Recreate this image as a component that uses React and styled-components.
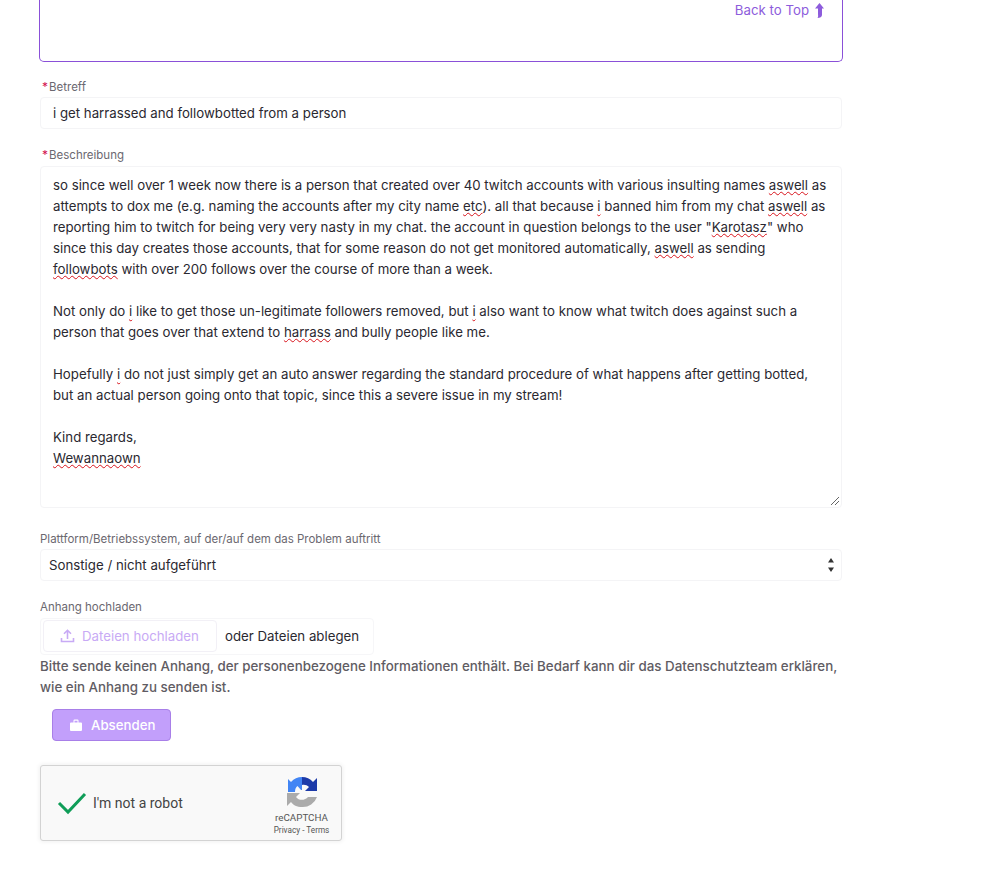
import React from "react";
import styled, { createGlobalStyle } from "styled-components";

const Global = createGlobalStyle`
  html, body { margin: 0; padding: 0; background: #fff; }
  body { font-family: Inter, "Noto Sans", "Liberation Sans", sans-serif; color: #232127; }
  * { box-sizing: border-box; }
`;
const Page = styled.div`
  width: 984px; height: 870px; overflow: hidden; padding-left: 39px;
  display: flex; flex-direction: column; align-items: flex-start;
`;
const TopPanel = styled.div`
  width: 804px; height: 62px; border: 1px solid #8a50d8; border-top: 0;
  border-radius: 0 0 5px 5px; display: flex; justify-content: flex-end;
  align-items: flex-start; padding: 2px 17px 0 0; gap: 5px;
  color: #8d5cdc; font-size: 13.25px; line-height: 17px;
`;
const Label = styled.div`
  display: flex; align-items: baseline; font-size: 11.5px; line-height: 14px; color: #6b6870;
  margin-top: ${p => p.$top}px; padding-left: ${p => (p.$required ? 3 : 1)}px;
`;
const Star = styled.span` color: #d3124f; margin-right: 1px; font-size: 12px; `;
const Field = styled.div`
  width: 802px; height: ${p => p.$h}px; margin-top: ${p => p.$gap}px; margin-left: 1px;
  border: 1px solid #f4f4f6; border-radius: 4px; background: #fff;
  font-size: 13.25px; line-height: 21px; color: #2a2830;
`;
const SingleLine = styled(Field)`
  display: flex; align-items: center; justify-content: space-between;
  padding: 0 ${p => p.$pr || 12}px 0 ${p => p.$pl || 12}px;
`;
const Multi = styled(Field)`
  position: relative; padding: 8px 12px;
`;
const Line = styled.div` white-space: pre; min-height: 21px; `;
const Sp = styled.span` text-decoration: underline wavy #d8141c 1px; text-underline-offset: 1px; `;
const Grip = styled.svg` position: absolute; right: 1px; bottom: 1px; `;
const Drop = styled.div`
  width: 334px; height: 37px; margin: 4px 0 0 1px; border: 1px solid #f6f6f8; border-radius: 4px;
  display: flex; align-items: center; padding: 0 0 2px 2px; gap: 8px; font-size: 13.25px; color: #2a2830;
`;
const UploadBtn = styled.div`
  width: 174px; height: 32px; border: 1px solid #f2f0f6; border-radius: 4px;
  display: flex; align-items: center; padding-left: 16px; gap: 7px; color: #c8aaf5;
`;
const Note = styled.div`
  margin: 1px 0 0 1px; font-size: 13.35px; line-height: 21px; color: #5f5c63; font-weight: 500; white-space: pre;
`;
const Submit = styled.div`
  margin: 11px 0 0 13px; width: 119px; height: 32px; background: #c29ffb; border: 1px solid #a87fe8;
  border-radius: 4px; display: flex; align-items: center; padding-left: 16px; gap: 8px;
  color: #fff; font-size: 13.25px; font-weight: 500;
`;
const Captcha = styled.div`
  position: relative; margin: 24px 0 0 1px; width: 302px; height: 76px; background: #f9f9f9;
  border: 1px solid #d3d3d3; border-radius: 3px; box-shadow: 0 0 4px 1px rgba(0,0,0,.06);
  display: flex; align-items: center; font-family: Roboto, "Liberation Sans", sans-serif;
`;
const Check = styled.svg` margin-left: 16px; flex: none; `;
const CaptchaText = styled.span` margin-left: 6px; font-size: 14px; color: #444; `;
const Badge = styled.div`
  margin-left: auto; width: 70px; padding: 5px 9px 0 0; display: flex; flex-direction: column; align-items: center;
`;
const BadgeName = styled.div` font-size: 9.8px; line-height: 11px; margin-top: 4px; color: #555; `;
const BadgeLinks = styled.div` font-size: 8.2px; line-height: 11px; margin-top: 2px; white-space: pre; color: #555; `;

export default function App() {
  return (
    <Page>
      <Global />
      <TopPanel>
        <span>Back to Top</span>
        <svg width="11" height="17" viewBox="0 0 11 17">
          <path d="M5.5 1 L10 6.5 H8 V13 C8 15 6 16 3.5 16 C4.5 15 4 13 4 12 V6.5 H1 Z" fill="#8d5cdc" />
        </svg>
      </TopPanel>
      <Label $top={18} $required><Star>*</Star>Betreff</Label>
      <SingleLine $h={32} $gap={3}>i get harrassed and followbotted from a person</SingleLine>
      <Label $top={19} $required><Star>*</Star>Beschreibung</Label>
      <Multi $h={342} $gap={4}>
        <Line>so since well over 1 week now there is a person that created over 40 twitch accounts with various insulting names <Sp>aswell</Sp> as</Line>
        <Line>attempts to dox me (e.g. naming the accounts after my city name <Sp>etc</Sp>). all that because <Sp>i</Sp> banned him from my chat <Sp>aswell</Sp> as</Line>
        <Line>reporting him to twitch for being very very nasty in my chat. the account in question belongs to the user "<Sp>Karotasz</Sp>" who</Line>
        <Line>since this day creates those accounts, that for some reason do not get monitored automatically, <Sp>aswell</Sp> as sending</Line>
        <Line><Sp>followbots</Sp> with over 200 follows over the course of more than a week.</Line>
        <Line> </Line>
        <Line>Not only do <Sp>i</Sp> like to get those un-legitimate followers removed, but <Sp>i</Sp> also want to know what twitch does against such a</Line>
        <Line>person that goes over that extend to <Sp>harrass</Sp> and bully people like me.</Line>
        <Line> </Line>
        <Line>Hopefully <Sp>i</Sp> do not just simply get an auto answer regarding the standard procedure of what happens after getting botted,</Line>
        <Line>but an actual person going onto that topic, since this a severe issue in my stream!</Line>
        <Line> </Line>
        <Line>Kind regards,</Line>
        <Line><Sp>Wewannaown</Sp></Line>
        <Grip width="10" height="10" viewBox="0 0 10 10">
          <path d="M1 9 L9 1 M5 9 L9 5" stroke="#666" strokeWidth="1" fill="none" />
        </Grip>
      </Multi>
      <Label $top={24}>Plattform/Betriebssystem, auf der/auf dem das Problem auftritt</Label>
      <SingleLine $h={32} $gap={3} $pl={8} $pr={6}>
        Sonstige / nicht aufgeführt
        <svg width="8" height="16" viewBox="0 0 8 16">
          <path d="M4 1 L7 5.5 H1 Z M1 10.5 H7 L4 15 Z" fill="#333" />
        </svg>
      </SingleLine>
      <Label $top={19}>Anhang hochladen</Label>
      <Drop>
        <UploadBtn>
          <svg width="15" height="15" viewBox="0 0 15 15" fill="none" stroke="#c8aaf5" strokeWidth="1.6">
            <path d="M7.5 11 V2.5 M4 5.8 L7.5 2.3 L11 5.8 M1.5 10 V13.5 H13.5 V10" />
          </svg>
          Dateien hochladen
        </UploadBtn>
        oder Dateien ablegen
      </Drop>
      <Note>{"Bitte sende keinen Anhang, der personenbezogene Informationen enthält. Bei Bedarf kann dir das Datenschutzteam erklären,\nwie ein Anhang zu senden ist."}</Note>
      <Submit>
        <svg width="14" height="14" viewBox="0 0 14 14">
          <path d="M2 4.5 H12 Q13 4.5 13 5.5 V12 Q13 13 12 13 H2 Q1 13 1 12 V5.5 Q1 4.5 2 4.5 Z M4.5 4.5 V2.5 Q4.5 1.5 5.5 1.5 H8.5 Q9.5 1.5 9.5 2.5 V4.5 H8.5 V2.7 H5.5 V4.5 Z" fill="#fff" />
        </svg>
        Absenden
      </Submit>
      <Captcha>
        <Check width="30" height="24" viewBox="0 0 30 24">
          <path d="M2 12 L11 21 L28 3" fill="none" stroke="#0f9d58" strokeWidth="3" />
        </Check>
        <CaptchaText>I'm not a robot</CaptchaText>
        <Badge>
          <svg width="32" height="32" viewBox="0 0 32 32">
            <path d="M16 1 A15 15 0 0 1 27 6 L31 2 V15 H19 L23 11 C21 9 18.5 8.5 16 9 Z" fill="#1c3aa9" />
            <path d="M16 1 A15 15 0 0 0 5 6 L2 3 V16 H9 C9 13 10 11 11.5 10 L15 14 H16 Z" fill="#4285f4" />
            <path d="M1 17 H14 L10 21 C13 25 19 24.5 22 21 H31 A15 15 0 0 1 16 31 C11 31 7 29 5 26 L1 30 Z" fill="#ababab" />
          </svg>
          <BadgeName>reCAPTCHA</BadgeName>
          <BadgeLinks>Privacy - Terms</BadgeLinks>
        </Badge>
      </Captcha>
    </Page>
  );
}
